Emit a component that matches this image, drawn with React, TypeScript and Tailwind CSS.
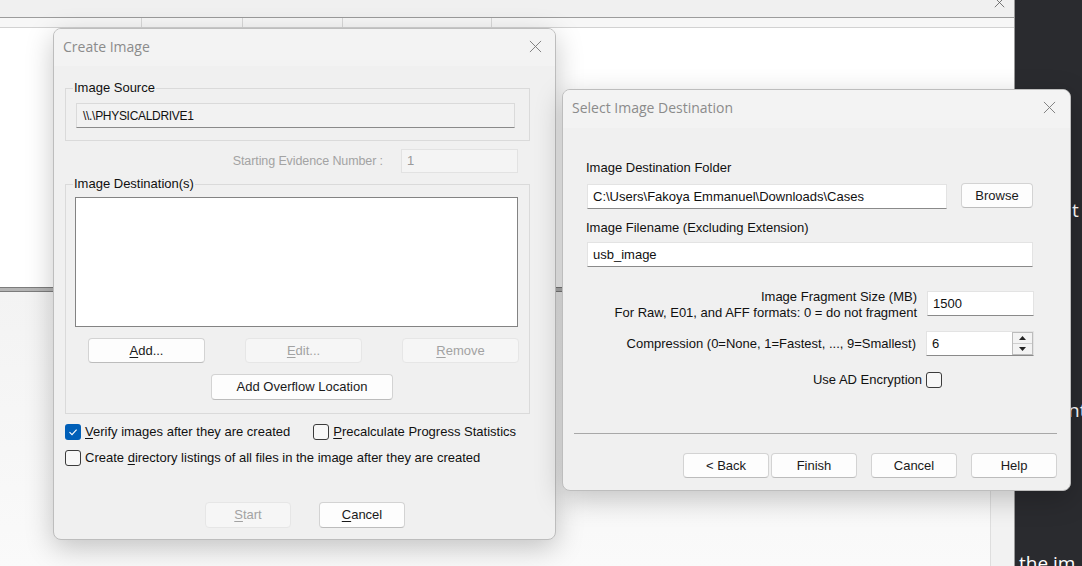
import React from "react";

const tah = "font-['Liberation_Sans',Arial,sans-serif] text-[13px] leading-[16px]";
const seg = "font-['Liberation_Sans',Arial,sans-serif] text-[13px] leading-[16px]";

function CloseX({ size = 14, color = "#6f6f6f" }: { size?: number; color?: string }) {
  return (
    <svg width={size} height={size} viewBox="0 0 14 14">
      <path d="M1 1 L13 13 M13 1 L1 13" stroke={color} strokeWidth="1" fill="none" />
    </svg>
  );
}

function U({ c }: { c: string }) {
  return <span className="underline underline-offset-[2px] decoration-1">{c}</span>;
}

function Btn({
  children,
  w,
  h = 25,
  disabled = false,
  className = "",
}: {
  children: React.ReactNode;
  w: number;
  h?: number;
  disabled?: boolean;
  className?: string;
}) {
  return (
    <div
      style={{ width: w, height: h }}
      className={
        "flex items-center justify-center rounded-[4px] border shrink-0 " +
        (disabled
          ? "bg-[#f6f6f6] border-[#e6e6e6] text-[#a2a2a2] "
          : "bg-[#fdfdfd] border-[#d3d3d3] border-b-[#bcbcbc] text-[#1a1a1a] ") +
        className
      }
    >
      {children}
    </div>
  );
}

function Check({ checked = false, size = 15 }: { checked?: boolean; size?: number }) {
  return checked ? (
    <div
      style={{ width: size, height: size }}
      className="rounded-[3px] bg-[#005fb8] flex items-center justify-center shrink-0"
    >
      <svg width="10" height="10" viewBox="0 0 10 10">
        <path d="M1.5 5.2 L4 7.6 L8.6 2.6" stroke="white" strokeWidth="1.1" fill="none" />
      </svg>
    </div>
  ) : (
    <div
      style={{ width: size, height: size }}
      className="rounded-[3px] border border-[#3b3b3b] bg-[#f7f7f7] shrink-0"
    />
  );
}

function CreateImage() {
  return (
    <div className="absolute left-[53px] top-[28px] w-[503px] h-[512px] rounded-[8px] border border-[#bdbdbd] bg-[#f0f0f0] shadow-[0_8px_28px_rgba(0,0,0,0.22)] overflow-hidden flex flex-col">
      <div className="h-[37px] bg-[#f3f3f3] flex items-center justify-between pl-[9px] pr-[13px] pb-[2px] shrink-0">
        <span className="font-['Open_Sans',sans-serif] text-[14px] text-[#8b8b8b]">Create Image</span>
        <CloseX size={13} color="#7a7a7a" />
      </div>
      <div className={"flex-1 flex flex-col px-[11px] text-[#111] " + tah}>
        <fieldset className="mt-[15px] w-[465px] border border-[#dadada] px-[10px] pb-[12px]">
          <legend className="ml-[-3px] px-[1px] leading-[14px]">Image Source</legend>
          <div className="mt-[8px] h-[25px] w-[439px] bg-[#f2f2f2] border border-[#dadada] border-b-[#8a8a8a] flex items-center pl-[6px] text-[12px] tracking-[-0.3px]">
            \\.\PHYSICALDRIVE1
          </div>
        </fieldset>
        <div className="mt-[8px] w-[465px] flex items-center justify-end pr-[12px] h-[24px]">
          <span className="text-[#a3a3a3] mr-[18px] text-[12.5px] tracking-[-0.1px]">Starting Evidence Number :</span>
          <div className="w-[117px] h-[24px] bg-[#f4f4f4] border border-[#e2e2e2] text-[#9a9a9a] flex items-center pl-[5px]">
            1
          </div>
        </div>
        <fieldset className="mt-[4px] w-[465px] border border-[#dadada] px-[9px] pb-[13px]">
          <legend className="ml-[-2px] px-[1px] leading-[14px]">Image Destination(s)</legend>
          <div className="mt-[6px] h-[130px] w-[443px] bg-white border border-[#838383]" />
          <div className="mt-[11px] flex items-center pl-[13px] gap-[40px]">
            <Btn w={117} h={25}>
              <span>
                <U c="A" />
                dd...
              </span>
            </Btn>
            <Btn w={117} h={25} disabled>
              <span>
                <U c="E" />
                dit...
              </span>
            </Btn>
            <Btn w={117} h={25} disabled>
              <span>
                <U c="R" />
                emove
              </span>
            </Btn>
          </div>
          <div className="mt-[11px] pl-[136px]">
            <Btn w={182} h={26}>Add Overflow Location</Btn>
          </div>
        </fieldset>
        <div className="mt-[10px] flex items-center h-[16px]">
          <Check checked size={16} />
          <span className="ml-[4px]">
            <U c="V" />
            erify images after they are created
          </span>
          <div className="ml-[23px] flex items-center">
            <Check size={16} />
            <span className="ml-[4px]">
              <U c="P" />
              recalculate Progress Statistics
            </span>
          </div>
        </div>
        <div className="mt-[10px] flex items-center h-[16px]">
          <Check size={16} />
          <span className="ml-[4px]">
            Create <U c="d" />
            irectory listings of all files in the image after they are created
          </span>
        </div>
        <div className="mt-[36px] flex items-center pl-[140px] gap-[28px]">
          <Btn w={86} h={26} disabled>
            <span>
              <U c="S" />
              tart
            </span>
          </Btn>
          <Btn w={86} h={26}>
            <span>
              <U c="C" />
              ancel
            </span>
          </Btn>
        </div>
      </div>
    </div>
  );
}

function SelectDest() {
  const input =
    "h-[25px] bg-white border border-[#e3e3e3] border-b-[#8a8a8a] flex items-center pl-[5px]";
  return (
    <div className="absolute left-[562px] top-[89px] w-[509px] h-[402px] rounded-[8px] border border-[#bdbdbd] bg-[#f0f0f0] shadow-[0_8px_28px_rgba(0,0,0,0.22)] overflow-hidden flex flex-col">
      <div className="h-[38px] bg-[#f3f3f3] flex items-center justify-between pl-[9px] pr-[14px] pb-[3px] shrink-0">
        <span className="font-['Open_Sans',sans-serif] text-[14px] text-[#8b8b8b]">
          Select Image Destination
        </span>
        <CloseX size={13} color="#7a7a7a" />
      </div>
      <div className={"flex-1 flex flex-col pl-[23px] text-[#111] " + seg}>
        <div className="mt-[32px]">Image Destination Folder</div>
        <div className="mt-[8px] flex items-start">
          <div className={input + " w-[360px] ml-[1px]"}>C:\Users\Fakoya Emmanuel\Downloads\Cases</div>
          <div className="ml-[14px] -mt-[1px]">
            <Btn w={72} h={25}>Browse</Btn>
          </div>
        </div>
        <div className="mt-[11px]">Image Filename (Excluding Extension)</div>
        <div className={input + " mt-[6px] w-[446px] ml-[1px]"}>usb_image</div>
        <div className="mt-[24px] flex items-start w-[448px]">
          <div className="flex-1 text-right leading-[16px] mt-[-2px]">
            <div>Image Fragment Size (MB)</div>
            <div>For Raw, E01, and AFF formats: 0 = do not fragment</div>
          </div>
          <div className={input + " ml-[10px] w-[107px]"}>1500</div>
        </div>
        <div className="mt-[10px] flex items-center w-[448px]">
          <div className="flex-1 text-right">Compression (0=None, 1=Fastest, ..., 9=Smallest)</div>
          <div className="ml-[10px] w-[108px] h-[25px] bg-white border border-[#e3e3e3] border-b-[#8a8a8a] flex">
            <div className="flex-1 flex items-center pl-[5px]">6</div>
            <div className="w-[21px] flex flex-col border border-[#bcbcbc] bg-[#f3f3f3]">
              <div className="flex-1 flex items-center justify-center border-b border-[#cfcfcf]">
                <svg width="7" height="4" viewBox="0 0 7 4">
                  <path d="M0 4 L3.5 0 L7 4 Z" fill="#222" />
                </svg>
              </div>
              <div className="flex-1 flex items-center justify-center">
                <svg width="7" height="4" viewBox="0 0 7 4">
                  <path d="M0 0 L3.5 4 L7 0 Z" fill="#222" />
                </svg>
              </div>
            </div>
          </div>
        </div>
        <div className="mt-[16px] flex items-center w-[356px] justify-end">
          <span className="mr-[4px]">Use AD Encryption</span>
          <Check size={16} />
        </div>
        <div className="mt-[45px] ml-[-12px] w-[483px] h-px bg-[#a8a8a8]" />
        <div className="mt-[19px] flex items-center pl-[97px]">
          <Btn w={86} h={25}>&lt; Back</Btn>
          <div className="ml-[2px]">
            <Btn w={86} h={25}>Finish</Btn>
          </div>
          <div className="ml-[14px]">
            <Btn w={86} h={25}>Cancel</Btn>
          </div>
          <div className="ml-[14px]">
            <Btn w={86} h={25}>Help</Btn>
          </div>
        </div>
      </div>
    </div>
  );
}

export default function App() {
  return (
    <div className="relative w-[1082px] h-[566px] overflow-hidden bg-white font-['Liberation_Sans',Arial,sans-serif]">
      <div className="flex w-full h-full">
        <div className="w-[1015px] h-full flex flex-col border-r border-[#9a9a9a]">
          <div className="h-[18px] bg-[#f0f0f0] border-b border-[#9c9c9c] flex justify-end items-start pr-[9px] overflow-hidden">
            <div className="-mt-[3px]">
              <CloseX size={11} color="#555" />
            </div>
          </div>
          <div className="h-[10px] bg-[#f7f7f7] border-b border-[#d2d2d2] flex">
            <div className="w-[142px] border-r border-[#d8d8d8]" />
            <div className="w-[101px] border-r border-[#d8d8d8]" />
            <div className="w-[100px] border-r border-[#d8d8d8]" />
            <div className="w-[149px] border-r border-[#d8d8d8]" />
          </div>
          <div className="h-[259px] bg-white" />
          <div className="h-[5px] bg-[#b4b4b4] border-y border-[#7c7c7c]" />
          <div className="flex-1 flex">
            <div className="flex-1 bg-gradient-to-b from-[#f3f3f3] to-[#fafafa]" />
            <div className="w-[24px] bg-[#f2f2f2] border-l border-[#dedede]" />
          </div>
        </div>
        <div className="flex-1 h-full bg-[#2a2b2f] text-white font-['Open_Sans',sans-serif] text-[19px] relative overflow-hidden">
          <div className="absolute left-[57px] top-[196px]">t</div>
          <div className="absolute left-[53px] top-[396px]">nt</div>
          <div className="absolute left-[4px] top-[549px]">the im</div>
        </div>
      </div>
      <CreateImage />
      <SelectDest />
    </div>
  );
}
